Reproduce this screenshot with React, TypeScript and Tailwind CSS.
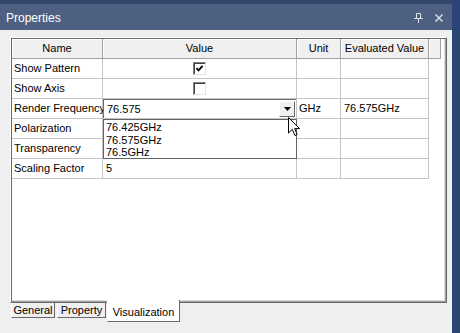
import React from 'react';

const rows = [
  { name: 'Show Pattern', kind: 'check', checked: true },
  { name: 'Show Axis', kind: 'check', checked: false },
  { name: 'Render Frequency', kind: 'combo', unit: 'GHz', evaluated: '76.575GHz' },
  { name: 'Polarization', kind: 'text', value: '' },
  { name: 'Transparency', kind: 'text', value: '' },
  { name: 'Scaling Factor', kind: 'text', value: '5' },
];

const options = ['76.425GHz', '76.575GHz', '76.5GHz'];

function CheckBox({ checked }: { checked: boolean }) {
  return (
    <div className="w-[13px] h-[13px] border border-[#808080] border-r-[#e3e3e3] border-b-[#e3e3e3] bg-white shadow-[inset_1px_1px_0_#404040] flex items-center justify-center">
      {checked && (
        <svg width="9" height="9" viewBox="0 0 9 9">
          <path d="M1.5 4.2 L3.5 6.4 L7.6 1.8" fill="none" stroke="#000" strokeWidth="1.8" />
        </svg>
      )}
    </div>
  );
}

function Cursor() {
  return (
    <svg width="13" height="20" viewBox="0 0 13 20" className="absolute left-[8px] top-[15px] z-20">
      <path d="M0.5 0.5 L0.5 16 L4.3 12.4 L6.9 18.5 L9.2 17.5 L6.7 11.6 L11.6 11.6 Z" fill="#fff" stroke="#000" strokeWidth="1" strokeLinejoin="miter" />
    </svg>
  );
}

function ComboCell() {
  return (
    <div className="relative h-full border-t border-l border-[#6d6d6d] bg-white flex items-center">
      <span className="pl-[3px] flex-1">76.575</span>
      <div className="relative w-[16px] h-[16px] mr-[1px] bg-[#f0f0f0] border border-[#fff] border-r-[#696969] border-b-[#696969] flex items-center justify-center">
        <svg width="7" height="4" viewBox="0 0 7 4">
          <path d="M0 0 L7 0 L3.5 4 Z" fill="#000" />
        </svg>
        <Cursor />
      </div>
      <div className="absolute left-[-1px] top-[19px] w-[194px] h-[40px] z-10 bg-white border border-[#646464] pl-[2px] pt-[1px] leading-[12.5px]">
        {options.map((o) => (
          <div key={o}>{o}</div>
        ))}
      </div>
    </div>
  );
}

export default function App() {
  return (
    <div className="w-[460px] h-[333px] flex bg-[#efefef] text-black font-['Liberation_Sans',Arial,sans-serif] text-[11px] overflow-hidden">
      <div className="w-[452px] flex flex-col">
        <div className="h-[4px] bg-[#34476b]" />
        <div className="h-[26px] bg-[#4d6082] flex items-center pl-[6px] pr-[8px] pt-[2px] text-white text-[12px]">
          <span className="flex-1">Properties</span>
          <svg width="9" height="10" viewBox="0 0 9 10" className="mr-[12px]">
            <path d="M2.5 0.5 H6.5 M2.5 0.5 V5 M6.5 0.5 V5 M0 5.5 H9 M4.5 5.5 V10" fill="none" stroke="#dde3ec" strokeWidth="1" />
          </svg>
          <svg width="8" height="8" viewBox="0 0 8 8" className="mr-[1px]">
            <path d="M0.5 0.5 L7.5 7.5 M7.5 0.5 L0.5 7.5" stroke="#dde3ec" strokeWidth="1.4" />
          </svg>
        </div>
        <div className="flex-1 pl-[10px] pr-[5px] pt-[7px] flex flex-col">
          <div className="h-[266px] border border-white border-r-[#696969] border-b-[#696969]">
            <div className="h-full border border-[#696969] border-r-[#a0a0a0] border-b-[#a0a0a0]">
              <div className="h-full border-r border-b border-[#dcdcdc] bg-white">
                <div className="flex h-[20px]">
                  {[
                    ['Name', 'w-[91px]'],
                    ['Value', 'w-[194px]'],
                    ['Unit', 'w-[44px]'],
                    ['Evaluated Value', 'w-[88px]'],
                    ['', 'w-[12px]'],
                  ].map(([label, w], i) => (
                    <div
                      key={i}
                      className={`${w} h-full bg-[#f0f0f0] border-r border-b border-[#a0a0a0] shadow-[inset_1px_1px_0_#fff] flex items-center justify-center`}
                    >
                      {label}
                    </div>
                  ))}
                </div>
                {rows.map((r) => (
                  <div key={r.name} className="flex h-[20px]">
                    <div className="w-[91px] h-full border-r border-b border-[#c4c4c4] flex items-center pl-[2px] whitespace-nowrap">
                      {r.name}
                    </div>
                    <div className="w-[194px] h-full border-r border-b border-[#c4c4c4] flex items-center justify-center">
                      {r.kind === 'check' && <CheckBox checked={!!r.checked} />}
                      {r.kind === 'combo' && (
                        <div className="w-full h-full">
                          <ComboCell />
                        </div>
                      )}
                      {r.kind === 'text' && <span className="w-full pl-[3px]">{r.value}</span>}
                    </div>
                    <div className="w-[44px] h-full border-r border-b border-[#c4c4c4] flex items-center pl-[2px]">
                      {r.unit}
                    </div>
                    <div className="w-[88px] h-full border-r border-b border-[#c4c4c4] flex items-center pl-[3px]">
                      {r.evaluated}
                    </div>
                  </div>
                ))}
              </div>
            </div>
          </div>
          <div className="flex items-start pl-[1px]">
            <div className="w-[44px] h-[15px] border-l border-[#fff] border-r border-b border-r-[#696969] border-b-[#696969] bg-[#efefef] flex items-center justify-center">
              General
            </div>
            <div className="w-[49px] h-[15px] ml-[2px] border-l border-[#fff] border-r border-b border-r-[#696969] border-b-[#696969] bg-[#efefef] flex items-center justify-center">
              Property
            </div>
            <div className="relative z-10 w-[73px] h-[22px] -mt-[3px] ml-[1px] border-l border-[#fff] border-r border-b border-r-[#696969] border-b-[#696969] bg-white flex items-center justify-center pt-[3px]">
              Visualization
            </div>
          </div>
        </div>
      </div>
      <div className="w-[8px] bg-[#2b4576]" />
    </div>
  );
}
